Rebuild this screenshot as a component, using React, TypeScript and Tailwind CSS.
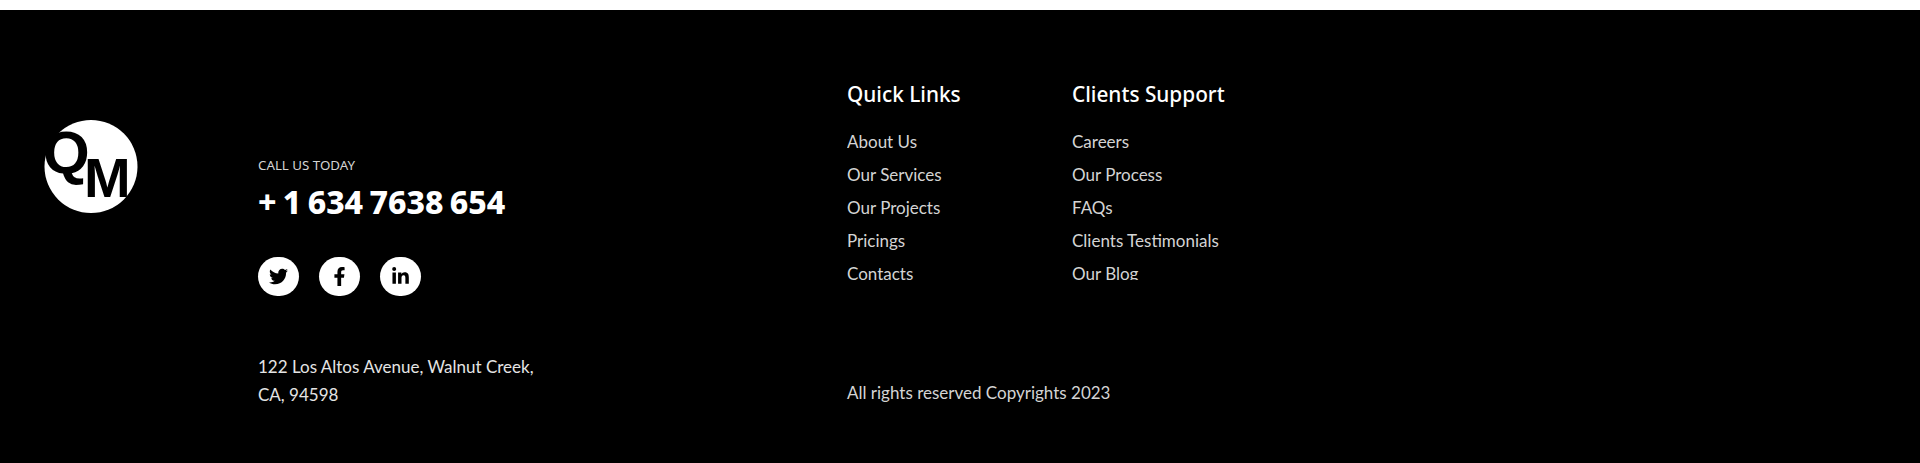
import { FaFacebookF, FaLinkedinIn, FaTwitter } from "react-icons/fa"

const quickLinks = ["About Us", "Our Services", "Our Projects", "Pricings", "Contacts"]
const supportLinks = ["Careers", "Our Process", "FAQs", "Clients Testimonials", "Our Blog"]

function Logo() {
  return (
    <svg width="100" height="96" viewBox="0 0 100 96" className="block">
      <circle cx="50" cy="47.5" r="46.5" fill="#fff" />
      <text x="2" y="54" fontFamily="'Liberation Sans', sans-serif" fontWeight="700" fontSize="60" fill="#000">
        Q
      </text>
      <text x="43" y="78" fontFamily="'Liberation Sans', sans-serif" fontWeight="700" fontSize="56" fill="#000">
        M
      </text>
    </svg>
  )
}

function LinkColumn({ title, links, className }: { title: string; links: string[]; className: string }) {
  return (
    <div className={className}>
      <h4 className="font-['Noto_Sans',sans-serif] text-[20.8px] leading-[28px] font-medium text-white">{title}</h4>
      <ul className="mt-[17px] h-[155px] overflow-hidden text-[17px] leading-[33px] text-[#d4d4d4]">
        {links.map((link) => (
          <li key={link}>{link}</li>
        ))}
      </ul>
    </div>
  )
}

export default function App() {
  return (
    <div className="h-[463px] bg-white pt-[10px] font-['Lato',sans-serif]">
      <footer className="flex h-[453px] bg-black pl-[41px]">
        <div className="w-[217px] pt-[109px]">
          <Logo />
        </div>

        {/* Call us */}
        <div className="w-[589px] pt-[146px]">
          <p className="font-['Noto_Sans',sans-serif] text-[13.3px] leading-[18px] text-[#d4d4d4]">CALL US TODAY</p>
          <p className="mt-[8px] font-['Noto_Sans',sans-serif] text-[32px] leading-[40px] font-extrabold text-white [word-spacing:-2px]">
            + 1 634 7638 654
          </p>
          <div className="mt-[35px] flex gap-5 text-[19px] text-black">
            <span className="flex h-[39px] w-[41px] items-center justify-center rounded-full bg-white">
              <FaTwitter />
            </span>
            <span className="flex h-[39px] w-[41px] items-center justify-center rounded-full bg-white">
              <FaFacebookF />
            </span>
            <span className="flex h-[39px] w-[41px] items-center justify-center rounded-full bg-white">
              <FaLinkedinIn />
            </span>
          </div>
          <p className="mt-[57px] text-[17px] leading-[28px] text-[#e4e4e4]">
            122 Los Altos Avenue, Walnut Creek,
            <br />
            CA, 94598
          </p>
        </div>

        {/* Links */}
        <div className="pt-[70px]">
          <div className="flex">
            <LinkColumn title="Quick Links" links={quickLinks} className="w-[225px]" />
            <LinkColumn title="Clients Support" links={supportLinks} className="w-[225px]" />
          </div>
          <p className="mt-[99px] text-[17px] leading-[28px] text-[#d4d4d4]">All rights reserved Copyrights 2023</p>
        </div>
      </footer>
    </div>
  )
}
